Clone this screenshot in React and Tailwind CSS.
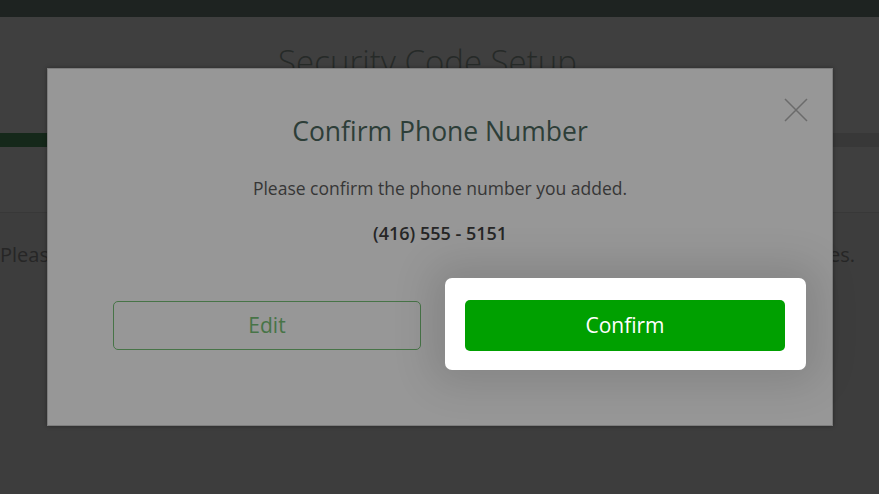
import React from "react";

export default function App() {
  const font = { fontFamily: '"Open Sans", "Noto Sans", sans-serif' };
  return (
    <div className="relative w-[879px] h-[494px] overflow-hidden bg-[#3d3d3d]" style={font}>
      <div className="h-[17px] bg-[#1e2321]" />
      <div className="h-[196px] bg-[#3f3f3f] flex flex-col border-b border-[#383838]">
        <div className="h-[116px] flex justify-center pt-[25px] pr-[24px]">
          <div className="text-[33px] leading-[40px] text-[#262a28] font-light">Security Code Setup</div>
        </div>
        <div className="h-[14px] bg-[#383838] flex">
          <div className="w-[40%] bg-[#15281a]" />
        </div>
      </div>
      <div className="pt-[29px] whitespace-nowrap text-[20px] leading-[26px] text-[#262626]">
        Please enter the mobile phone number where you would like to receive your security codes.
      </div>

      <div className="absolute left-[47px] top-[68px] w-[786px] h-[358px] bg-[#979797] border border-[#7d7d7d] shadow-[0_0_4px_rgba(0,0,0,0.35)] flex flex-col items-center">
        <button className="absolute right-[24px] top-[29px] w-[24px] h-[24px]">
          <svg viewBox="0 0 24 24" className="w-[24px] h-[24px]" fill="none" stroke="#6b6b6b" strokeWidth="1.5">
            <path d="M1 1 L23 23 M23 1 L1 23" />
          </svg>
        </button>
        <div className="mt-[44px] text-[26.5px] leading-[36px] text-[#2d3e38]">Confirm Phone Number</div>
        <div className="mt-[27px] text-[17.5px] leading-[24px] text-[#363636]">Please confirm the phone number you added.</div>
        <div className="mt-[20px] text-[18px] leading-[26px] font-semibold text-[#262626]">(416) 555 - 5151</div>
        <div className="self-stretch flex items-start pl-[65px] mt-[32px] gap-[24px]">
          <button className="mt-[23px] w-[308px] h-[49px] rounded-[5px] border-[1.5px] border-[#477447] text-[21px] text-[#477447]">
            Edit
          </button>
          <div className="bg-white rounded-[7px] pt-[22px] pb-[19px] pl-[20px] pr-[21px] shadow-[0_0_40px_14px_rgba(0,0,0,0.12)]">
            <button className="w-[320px] h-[51px] rounded-[5px] bg-[#00a000] text-[21px] text-white">
              Confirm
            </button>
          </div>
        </div>
      </div>
    </div>
  );
}
